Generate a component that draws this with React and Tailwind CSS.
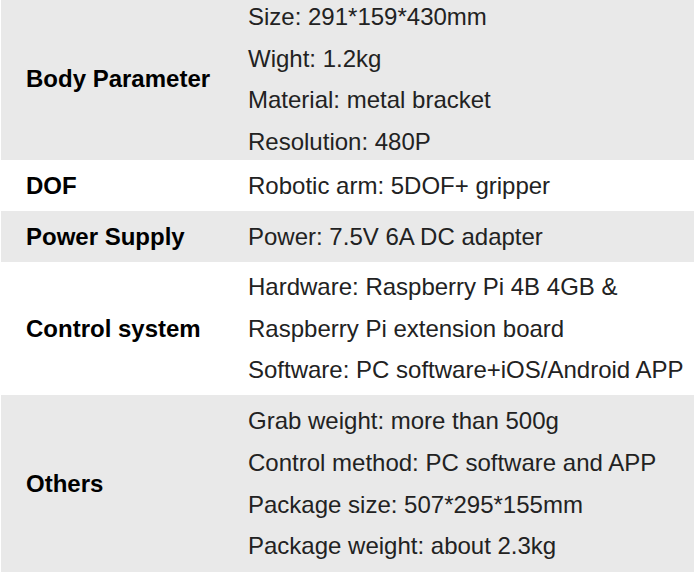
const rows = [
  {
    label: "Body Parameter",
    lines: [
      "Size: 291*159*430mm",
      "Wight: 1.2kg",
      "Material: metal bracket",
      "Resolution: 480P",
    ],
    gray: true,
    h: "h-[164px]",
  },
  { label: "DOF", lines: ["Robotic arm: 5DOF+ gripper"], gray: false, h: "h-[51px]" },
  { label: "Power Supply", lines: ["Power: 7.5V 6A DC adapter"], gray: true, h: "h-[51px]" },
  {
    label: "Control system",
    lines: [
      "Hardware: Raspberry Pi 4B 4GB &",
      "Raspberry Pi extension board",
      "Software: PC software+iOS/Android APP",
    ],
    gray: false,
    h: "h-[133px]",
  },
  {
    label: "Others",
    lines: [
      "Grab weight: more than 500g",
      "Control method: PC software and APP",
      "Package size: 507*295*155mm",
      "Package weight: about 2.3kg",
    ],
    gray: true,
    h: "h-[177px]",
  },
];

export default function App() {
  return (
    <div className="h-[579px] w-[695px] overflow-hidden bg-white font-['Liberation_Sans',Arial,sans-serif]">
      <div className="mt-[-4px] pl-px pr-px">
        {rows.map((row) => (
          <div
            key={row.label}
            className={`grid grid-cols-[221px_1fr] ${row.h} ${row.gray ? "bg-[#e9e9e9]" : "bg-white"}`}
          >
            <div className="flex items-center pl-[25px] text-[24px] font-bold text-black">
              {row.label}
            </div>
            <div className="flex flex-col justify-center whitespace-nowrap pl-[26px] text-[24px] leading-[41.7px] text-[#222]">
              {row.lines.map((line) => (
                <div key={line}>{line}</div>
              ))}
            </div>
          </div>
        ))}
      </div>
    </div>
  );
}
